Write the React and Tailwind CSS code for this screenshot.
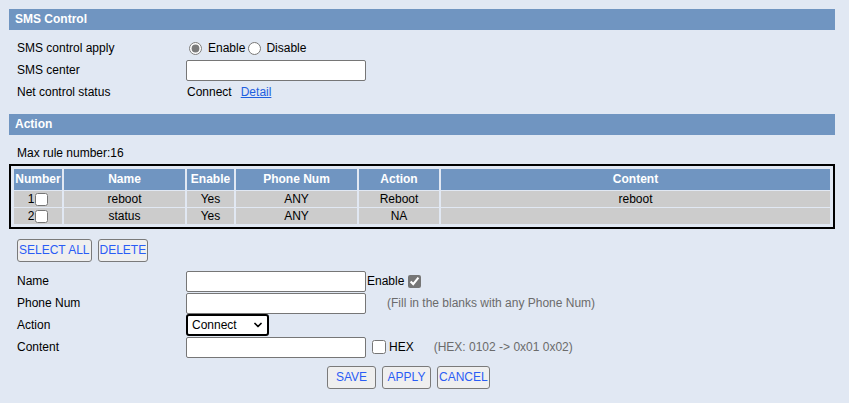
import React from 'react';
import { ChevronDown } from 'lucide-react';

const rules = [
  { no: 1, name: 'reboot', enable: 'Yes', phone: 'ANY', action: 'Reboot', content: 'reboot' },
  { no: 2, name: 'status', enable: 'Yes', phone: 'ANY', action: 'NA', content: '' },
];

const SectionBar = ({ title }) => (
  <div className="h-[21px] bg-[#7095c1] pl-[6px] text-[12px] font-bold leading-[21px] text-white">{title}</div>
);

const Btn = ({ children }) => (
  <button className="h-[23px] min-w-[49px] rounded-[3px] border border-[#7a7a7a] bg-[#efefef] px-px text-center text-[12px] leading-[21px] text-[#2a5df5]">
    {children}
  </button>
);

const TextBox = () => (
  <input type="text" className="h-[21px] w-[180px] rounded-[2px] border border-[#767676] bg-white px-1 text-[12px]" />
);

const cols = 'grid grid-cols-[48px_121px_47px_121px_80px_1fr] gap-x-[2px]';

const App = () => {
  return (
    <div className="min-h-[403px] bg-[#e1e8f3] pt-[9px] text-[12px] text-black" style={{ fontFamily: '"Liberation Sans", Arial, sans-serif' }}>
      <div className="ml-[9px] w-[826px]">
        <SectionBar title="SMS Control" />

        <div className="mt-[7px]">
          <div className="flex h-[22px] items-center">
            <div className="w-[177px] pl-[8px]">SMS control apply</div>
            <label className="flex items-center">
              <input type="radio" name="apply" defaultChecked className="ml-[3px] mr-[6px] h-[13px] w-[13px] accent-[#7b7b7b]" />
              Enable
            </label>
            <label className="flex items-center">
              <input type="radio" name="apply" className="ml-[3px] mr-[5px] h-[13px] w-[13px] accent-[#7b7b7b]" />
              Disable
            </label>
          </div>
          <div className="flex h-[22px] items-center">
            <div className="w-[177px] pl-[8px]">SMS center</div>
            <TextBox />
          </div>
          <div className="flex h-[22px] items-center">
            <div className="w-[177px] pl-[8px]">Net control status</div>
            <span className="ml-[1px]">Connect</span>
            <a href="#" className="ml-[9px] text-[#1f5fe0] underline">Detail</a>
          </div>
        </div>

        <div className="mt-[11px]">
          <SectionBar title="Action" />
        </div>

        <div className="mt-[8px] h-[21px] pl-[8px] leading-[21px]">Max rule number:16</div>

        <div className="border-2 border-black p-[3px]">
          <div className={`${cols} h-[21px] bg-[#e1e8f3] text-center font-bold leading-[21px] text-white`}>
            <div className="bg-[#7095c1] whitespace-nowrap">Number</div>
            <div className="bg-[#7095c1]">Name</div>
            <div className="bg-[#7095c1]">Enable</div>
            <div className="bg-[#7095c1]">Phone Num</div>
            <div className="bg-[#7095c1]">Action</div>
            <div className="bg-[#7095c1]">Content</div>
          </div>
          {rules.map((r) => (
            <div key={r.no} className={`${cols} mt-px h-[16px] text-center leading-[16px]`}>
              <div className="flex items-center justify-center bg-[#cccccc]">
                {r.no}
                <input type="checkbox" className="ml-px h-[13px] w-[13px]" />
              </div>
              <div className="bg-[#cccccc]">{r.name}</div>
              <div className="bg-[#cccccc]">{r.enable}</div>
              <div className="bg-[#cccccc]">{r.phone}</div>
              <div className="bg-[#cccccc]">{r.action}</div>
              <div className="bg-[#cccccc]">{r.content}</div>
            </div>
          ))}
        </div>

        <div className="mt-[10px] flex gap-[6px] pl-[8px]">
          <Btn>SELECT ALL</Btn>
          <Btn>DELETE</Btn>
        </div>

        <div className="mt-[8px]">
          <div className="flex h-[22px] items-center">
            <div className="w-[177px] pl-[8px]">Name</div>
            <TextBox />
            <span className="ml-px">Enable</span>
            <input type="checkbox" defaultChecked className="ml-[4px] h-[13px] w-[13px] accent-[#767676]" />
          </div>
          <div className="flex h-[22px] items-center">
            <div className="w-[177px] pl-[8px]">Phone Num</div>
            <TextBox />
            <span className="ml-[21px] text-[#6b6b6b]">(Fill in the blanks with any Phone Num)</span>
          </div>
          <div className="flex h-[22px] items-center">
            <div className="w-[177px] pl-[8px]">Action</div>
            <div className="relative h-[22px] w-[83px]">
              <select defaultValue="Connect" className="h-[22px] w-[83px] appearance-none rounded-[3px] border-2 border-black bg-white pl-[4px] text-[12px] leading-[18px]">
                <option>Connect</option>
                <option>Reboot</option>
                <option>Status</option>
              </select>
              <ChevronDown size={12} strokeWidth={3.5} className="pointer-events-none absolute right-[5px] top-[5px] text-black" />
            </div>
          </div>
          <div className="flex h-[22px] items-center">
            <div className="w-[177px] pl-[8px]">Content</div>
            <TextBox />
            <input type="checkbox" className="ml-[6px] h-[14px] w-[14px]" />
            <span className="ml-[3px]">HEX</span>
            <span className="ml-[20px] text-[#6b6b6b]">(HEX: 0102 -&gt; 0x01 0x02)</span>
          </div>
        </div>

        <div className="mt-[8px] flex gap-[6px] pl-[318px]">
          <Btn>SAVE</Btn>
          <Btn>APPLY</Btn>
          <Btn>CANCEL</Btn>
        </div>
      </div>
    </div>
  );
};

export default App;
